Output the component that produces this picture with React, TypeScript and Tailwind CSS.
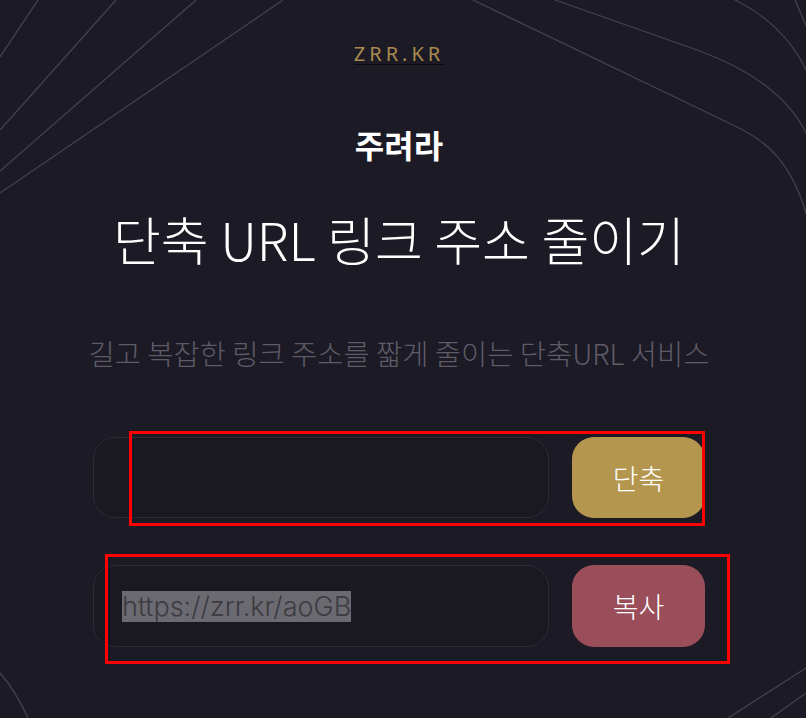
import React from 'react';

const KR = "font-['Noto_Sans_CJK_KR','Noto_Sans',sans-serif]";

function BackgroundLines() {
  return (
    <svg
      className="pointer-events-none absolute inset-0 h-full w-full"
      viewBox="0 0 806 718"
      preserveAspectRatio="none"
      fill="none"
      stroke="#45424f"
      strokeWidth="1.3"
    >
      {/* left fan */}
      <path d="M38 0 L0 57" />
      <path d="M116 0 L0 130" />
      <path d="M196 0 L0 171" />
      <path d="M283 0 L0 193" />
      {/* right rounded edges */}
      <path d="M473 0 L735 126 C765 140 790 160 806 213 L830 290" />
      <path d="M555 0 L700 51 C740 66 785 90 806 133 L820 170" />
      <path d="M735 0 C760 12 790 35 806 70 L815 95" />
      <path d="M795 0 L810 35" />
      {/* bottom corners */}
      <path d="M0 673 Q15 690 28 718" />
      <path d="M806 668 L728 718" />
      <path d="M806 693 L771 718" />
    </svg>
  );
}

export default function App() {
  return (
    <div className="relative min-h-screen w-full overflow-hidden bg-[#1c1a24]">
      <BackgroundLines />

      <div className="relative flex w-[798px] flex-col items-center">
        {/* Brand */}
        <a className="mt-[42px] text-[20px] leading-[24px] tracking-[0.2em] text-[#a88a50] underline decoration-[#0b0a0e] decoration-1 underline-offset-[3px] font-['Noto_Sans','Inter',sans-serif]">
          ZRR.KR
        </a>

        <div className={`mt-[62px] text-[32px] leading-[32px] font-bold text-white ${KR}`}>주려라</div>

        <h1 className={`mt-[53px] text-[52px] leading-[52px] font-extralight text-white ${KR}`}>
          단축 URL 링크 주소 줄이기
        </h1>

        <p className={`mt-[74px] text-[28.5px] leading-[28px] font-light text-[#5f5c68] ${KR}`}>
          길고 복잡한 링크 주소를 짧게 줄이는 단축URL 서비스
        </p>

        {/* Shorten */}
        <div className="relative mt-[70px] flex w-[612px] gap-[23px]">
          <div className="h-[81px] flex-1 rounded-[22px] border border-[#2c2a33] bg-[#1a1821]" />
          <button className={`h-[81px] w-[133px] rounded-[22px] bg-[#b5964f] text-[28px] font-light text-white ${KR}`}>
            단축
          </button>
          <div className="pointer-events-none absolute left-[36px] top-[-6px] h-[95px] w-[576px] border-[3px] border-[#ff0000]" />
        </div>

        {/* Result */}
        <div className="relative mt-[47px] flex w-[612px] gap-[23px]">
          <div className="flex h-[82px] flex-1 items-center rounded-[22px] border border-[#2c2a33] bg-[#1a1821] pl-[28px]">
            <span className="bg-[#6b6a70] text-[27px] font-light leading-[31px] text-[#3c3b42] font-['Inter',sans-serif]">
              https://zrr.kr/aoGB
            </span>
          </div>
          <button className={`h-[82px] w-[133px] rounded-[22px] bg-[#9a4e5a] text-[28px] font-light text-white ${KR}`}>
            복사
          </button>
          <div className="pointer-events-none absolute left-[12px] top-[-11px] h-[110px] w-[625px] border-[3px] border-[#ff0000]" />
        </div>
      </div>
    </div>
  );
}
